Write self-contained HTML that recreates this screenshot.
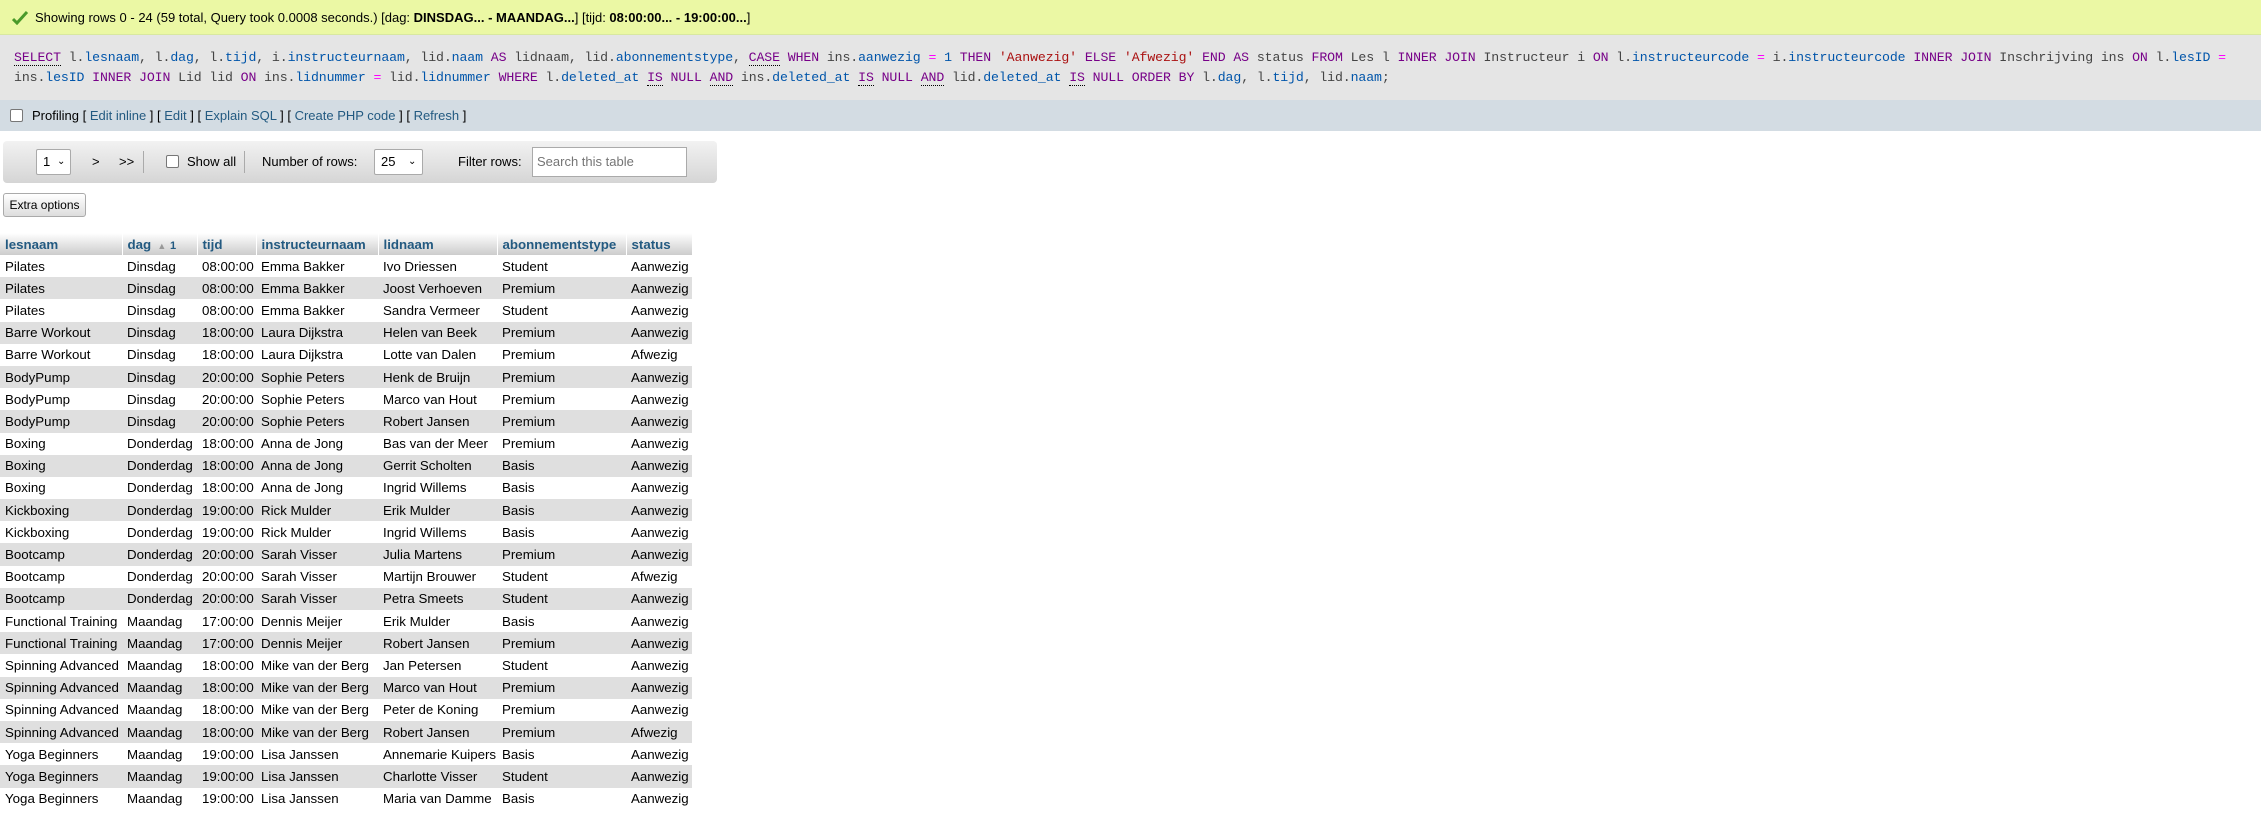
<!DOCTYPE html>
<html><head><meta charset="utf-8"><style>
*{box-sizing:border-box}
body{margin:0;width:2261px;height:813px;overflow:hidden;background:#fff;font-family:"Liberation Sans",Arial,sans-serif;font-size:13px;color:#000}
a{color:#235a81;text-decoration:none}
.ok{position:absolute;left:0;top:0;width:2261px;height:35px;background:#ebf8a4;border-bottom:1px solid #d8e8a0;padding-left:35px;line-height:35px;font-size:13px}
.ok svg{position:absolute;left:12px;top:11px}
.sql{position:absolute;left:0;top:35px;width:2261px;height:65px;background:#e5e5e5;padding:13px 0 0 14px;font-family:"Liberation Mono","DejaVu Sans Mono",monospace;font-size:13.2px;line-height:20px;white-space:pre;color:#444;letter-spacing:-0.1px}
.k{color:#708}.v{color:#05a}.o{color:#f0f}.s{color:#a11}.u{border-bottom:1px dotted #000}
.prof{position:absolute;left:0;top:100px;width:2261px;height:31px;background:#d3dce3;line-height:31px;padding-left:32px}
.cb{position:absolute;width:13px;height:13px;border:1px solid #777;border-radius:2px;background:#fff}
.nav{position:absolute;left:3px;top:141px;width:714px;height:42px;border-radius:4px;background:linear-gradient(#f2f2f2,#d5d5d5);}
.nav span{position:absolute;top:0;line-height:42px}
.sel{position:absolute;background:#fff;border:1px solid #aaa;border-radius:2px;height:26px;top:8px;line-height:24px;padding-left:6px}
.inp{position:absolute;left:529px;top:6px;width:155px;height:30px;background:#fff;border:1px solid #aaa;line-height:28px;padding-left:4px;color:#757575}
.btn{position:absolute;left:3px;top:193px;width:83px;height:24px;border:1px solid #aaa;border-radius:3px;background:linear-gradient(#fff,#ddd);font-size:12px;line-height:22px;text-align:center}
table{position:absolute;left:0;top:233px;border-collapse:collapse;table-layout:fixed;font-size:13.3px}
th{height:22px;background:linear-gradient(#fff,#ccc);color:#235a81;text-align:left;font-weight:bold;padding:0 0 0 5px;border-right:1px solid #fff}
td{height:22.2px;padding:0 0 0 5px;white-space:nowrap;overflow:hidden}
tbody tr:nth-child(even) td{background:#dfdfdf}
</style></head><body>
<div class="ok"><svg width="16" height="14" viewBox="0 0 16 14"><path d="M1 8 L5 12 L15 1" stroke="#4a9a2a" stroke-width="3" fill="none"/></svg>Showing rows 0 - 24 (59 total, Query took 0.0008 seconds.) [dag: <b>DINSDAG... - MAANDAG...</b>] [tijd: <b>08:00:00... - 19:00:00...</b>]</div>
<div class="sql"><span class="k u">SELECT</span> l.<span class="v">lesnaam</span>, l.<span class="v">dag</span>, l.<span class="v">tijd</span>, i.<span class="v">instructeurnaam</span>, lid.<span class="v">naam</span> <span class="k">AS</span> lidnaam, lid.<span class="v">abonnementstype</span>, <span class="k u">CASE</span> <span class="k">WHEN</span> ins.<span class="v">aanwezig</span> <span class="o">=</span> <span class="v">1</span> <span class="k">THEN</span> <span class="s">'Aanwezig'</span> <span class="k">ELSE</span> <span class="s">'Afwezig'</span> <span class="k">END</span> <span class="k">AS</span> status <span class="k">FROM</span> Les l <span class="k">INNER JOIN</span> Instructeur i <span class="k">ON</span> l.<span class="v">instructeurcode</span> <span class="o">=</span> i.<span class="v">instructeurcode</span> <span class="k">INNER JOIN</span> Inschrijving ins <span class="k">ON</span> l.<span class="v">lesID</span> <span class="o">=</span>
ins.<span class="v">lesID</span> <span class="k">INNER JOIN</span> Lid lid <span class="k">ON</span> ins.<span class="v">lidnummer</span> <span class="o">=</span> lid.<span class="v">lidnummer</span> <span class="k">WHERE</span> l.<span class="v">deleted_at</span> <span class="k u">IS</span> <span class="k">NULL</span> <span class="k u">AND</span> ins.<span class="v">deleted_at</span> <span class="k u">IS</span> <span class="k">NULL</span> <span class="k u">AND</span> lid.<span class="v">deleted_at</span> <span class="k u">IS</span> <span class="k">NULL</span> <span class="k">ORDER BY</span> l.<span class="v">dag</span>, l.<span class="v">tijd</span>, lid.<span class="v">naam</span>;</div>
<div class="prof"><div class="cb" style="left:10px;top:9px"></div>Profiling [ <a>Edit inline</a> ] [ <a>Edit</a> ] [ <a>Explain SQL</a> ] [ <a>Create PHP code</a> ] [ <a>Refresh</a> ]</div>
<div class="nav">
<div class="sel" style="left:33px;width:35px">1 <span style="position:absolute;left:20px;top:0;line-height:24px;font-size:10px">&#8964;</span></div>
<span style="left:89px">&gt;</span><span style="left:116px">&gt;&gt;</span>
<div style="position:absolute;left:140px;top:10px;width:1px;height:22px;background:#aaa"></div>
<div class="cb" style="left:163px;top:14px"></div>
<span style="left:184px">Show all</span>
<div style="position:absolute;left:241px;top:10px;width:1px;height:22px;background:#aaa"></div>
<span style="left:259px">Number of rows:</span>
<div class="sel" style="left:371px;width:49px">25 <span style="position:absolute;left:33px;top:0;line-height:24px;font-size:10px">&#8964;</span></div>
<span style="left:455px">Filter rows:</span>
<div class="inp">Search this table</div>
</div>
<div class="btn">Extra options</div>
<table>
<colgroup><col style="width:122px"><col style="width:75px"><col style="width:59px"><col style="width:122px"><col style="width:119px"><col style="width:129px"><col style="width:66px"></colgroup>
<thead><tr><th>lesnaam</th><th>dag <span style="color:#999;font-size:9px;font-weight:normal">&nbsp;▲</span>&nbsp;<span style="font-size:11px">1</span></th><th>tijd</th><th>instructeurnaam</th><th>lidnaam</th><th>abonnementstype</th><th>status</th></tr></thead>
<tbody>
<tr><td>Pilates</td><td>Dinsdag</td><td>08:00:00</td><td>Emma Bakker</td><td>Ivo Driessen</td><td>Student</td><td>Aanwezig</td></tr>
<tr><td>Pilates</td><td>Dinsdag</td><td>08:00:00</td><td>Emma Bakker</td><td>Joost Verhoeven</td><td>Premium</td><td>Aanwezig</td></tr>
<tr><td>Pilates</td><td>Dinsdag</td><td>08:00:00</td><td>Emma Bakker</td><td>Sandra Vermeer</td><td>Student</td><td>Aanwezig</td></tr>
<tr><td>Barre Workout</td><td>Dinsdag</td><td>18:00:00</td><td>Laura Dijkstra</td><td>Helen van Beek</td><td>Premium</td><td>Aanwezig</td></tr>
<tr><td>Barre Workout</td><td>Dinsdag</td><td>18:00:00</td><td>Laura Dijkstra</td><td>Lotte van Dalen</td><td>Premium</td><td>Afwezig</td></tr>
<tr><td>BodyPump</td><td>Dinsdag</td><td>20:00:00</td><td>Sophie Peters</td><td>Henk de Bruijn</td><td>Premium</td><td>Aanwezig</td></tr>
<tr><td>BodyPump</td><td>Dinsdag</td><td>20:00:00</td><td>Sophie Peters</td><td>Marco van Hout</td><td>Premium</td><td>Aanwezig</td></tr>
<tr><td>BodyPump</td><td>Dinsdag</td><td>20:00:00</td><td>Sophie Peters</td><td>Robert Jansen</td><td>Premium</td><td>Aanwezig</td></tr>
<tr><td>Boxing</td><td>Donderdag</td><td>18:00:00</td><td>Anna de Jong</td><td>Bas van der Meer</td><td>Premium</td><td>Aanwezig</td></tr>
<tr><td>Boxing</td><td>Donderdag</td><td>18:00:00</td><td>Anna de Jong</td><td>Gerrit Scholten</td><td>Basis</td><td>Aanwezig</td></tr>
<tr><td>Boxing</td><td>Donderdag</td><td>18:00:00</td><td>Anna de Jong</td><td>Ingrid Willems</td><td>Basis</td><td>Aanwezig</td></tr>
<tr><td>Kickboxing</td><td>Donderdag</td><td>19:00:00</td><td>Rick Mulder</td><td>Erik Mulder</td><td>Basis</td><td>Aanwezig</td></tr>
<tr><td>Kickboxing</td><td>Donderdag</td><td>19:00:00</td><td>Rick Mulder</td><td>Ingrid Willems</td><td>Basis</td><td>Aanwezig</td></tr>
<tr><td>Bootcamp</td><td>Donderdag</td><td>20:00:00</td><td>Sarah Visser</td><td>Julia Martens</td><td>Premium</td><td>Aanwezig</td></tr>
<tr><td>Bootcamp</td><td>Donderdag</td><td>20:00:00</td><td>Sarah Visser</td><td>Martijn Brouwer</td><td>Student</td><td>Afwezig</td></tr>
<tr><td>Bootcamp</td><td>Donderdag</td><td>20:00:00</td><td>Sarah Visser</td><td>Petra Smeets</td><td>Student</td><td>Aanwezig</td></tr>
<tr><td>Functional Training</td><td>Maandag</td><td>17:00:00</td><td>Dennis Meijer</td><td>Erik Mulder</td><td>Basis</td><td>Aanwezig</td></tr>
<tr><td>Functional Training</td><td>Maandag</td><td>17:00:00</td><td>Dennis Meijer</td><td>Robert Jansen</td><td>Premium</td><td>Aanwezig</td></tr>
<tr><td>Spinning Advanced</td><td>Maandag</td><td>18:00:00</td><td>Mike van der Berg</td><td>Jan Petersen</td><td>Student</td><td>Aanwezig</td></tr>
<tr><td>Spinning Advanced</td><td>Maandag</td><td>18:00:00</td><td>Mike van der Berg</td><td>Marco van Hout</td><td>Premium</td><td>Aanwezig</td></tr>
<tr><td>Spinning Advanced</td><td>Maandag</td><td>18:00:00</td><td>Mike van der Berg</td><td>Peter de Koning</td><td>Premium</td><td>Aanwezig</td></tr>
<tr><td>Spinning Advanced</td><td>Maandag</td><td>18:00:00</td><td>Mike van der Berg</td><td>Robert Jansen</td><td>Premium</td><td>Afwezig</td></tr>
<tr><td>Yoga Beginners</td><td>Maandag</td><td>19:00:00</td><td>Lisa Janssen</td><td>Annemarie Kuipers</td><td>Basis</td><td>Aanwezig</td></tr>
<tr><td>Yoga Beginners</td><td>Maandag</td><td>19:00:00</td><td>Lisa Janssen</td><td>Charlotte Visser</td><td>Student</td><td>Aanwezig</td></tr>
<tr><td>Yoga Beginners</td><td>Maandag</td><td>19:00:00</td><td>Lisa Janssen</td><td>Maria van Damme</td><td>Basis</td><td>Aanwezig</td></tr>
</tbody>
</table>
</body></html>
